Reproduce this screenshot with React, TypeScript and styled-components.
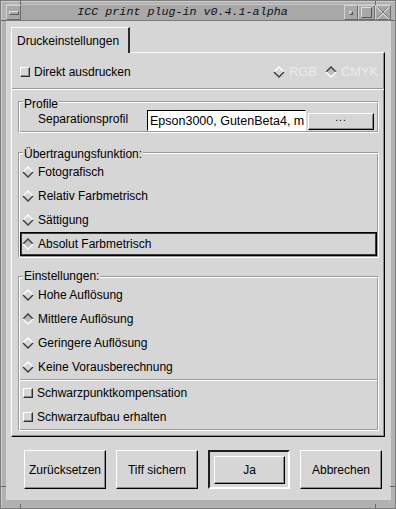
import React from "react";
import styled, { createGlobalStyle } from "styled-components";

const GlobalStyle = createGlobalStyle`
  html, body {
    margin: 0;
    padding: 0;
    background: #b2b2b2;
  }
  body {
    font-family: "Liberation Sans", Arial, sans-serif;
    font-size: 12px;
    color: #000;
  }
  * {
    box-sizing: border-box;
  }
`;

const BG = "#d6d6d6";
const ETCH = "#9a9a9a";

const Window = styled.div`
    position: relative;
    width: 396px;
    height: 509px;
    background: #b2b2b2;
    border: 1px solid #7c7c7c;
    box-shadow: inset 1px 1px 0 #cfcfcf;
    padding: 3px 4px 8px 5px;
    display: flex;
    flex-direction: column;
`;

const Tick = styled.span<{ $v?: boolean }>`
    position: absolute;
    background: #6a6a6a;
    width: ${(p) => (p.$v ? "1px" : "5px")};
    height: ${(p) => (p.$v ? "4px" : "1px")};
`;

const TitleBar = styled.div`
    height: 17px;
    display: flex;
    background: #a8a8a8;
    border-top: 1px solid #c6c6c6;
    border-bottom: 1px solid #7a7a7a;
`;

const TitleButton = styled.div<{ $w: number }>`
    width: ${(p) => p.$w}px;
    height: 100%;
    display: flex;
    align-items: center;
    justify-content: center;
    border: 1px solid;
    border-color: #d4d4d4 #6c6c6c #6c6c6c #d4d4d4;
`;

const MenuBar = styled.span`
    width: 10px;
    height: 4px;
    border: 1px solid;
    border-color: #e0e0e0 #555 #555 #e0e0e0;
`;

const MinBox = styled.span`
    width: 4px;
    height: 4px;
    border: 1px solid;
    border-color: #e0e0e0 #555 #555 #e0e0e0;
`;

const MaxBox = styled.span`
    width: 11px;
    height: 11px;
    border: 1px solid;
    border-color: #e0e0e0 #555 #555 #e0e0e0;
`;

const Title = styled.div`
    flex: 1;
    text-align: center;
    font-family: "Liberation Mono", "Courier New", monospace;
    font-style: italic;
    font-size: 11.7px;
    line-height: 15px;
    color: #111;
`;

const Content = styled.div`
    flex: 1;
    background: ${BG};
    padding: 6px 6px 0 5px;
    display: flex;
    flex-direction: column;
`;

const Tab = styled.div`
    position: relative;
    z-index: 1;
    align-self: flex-start;
    width: 119px;
    height: 26px;
    margin-bottom: -1px;
    padding: 6px 0 0 5px;
    line-height: 14px;
    background: ${BG};
    border-top: 1px solid #fff;
    border-left: 1px solid #fff;
    border-right: 2px solid #2a2a2a;
`;

const Panel = styled.div`
    width: 374px;
    height: 385px;
    border: 1px solid;
    border-color: #fff #000 #000 #fff;
    box-shadow: inset -1px -1px 0 #8c8c8c;
    display: flex;
    flex-direction: column;
`;

const TopRow = styled.div`
    height: 20px;
    margin-top: 9px;
    padding: 0 6px 0 8px;
    display: flex;
    align-items: center;
`;

const Spacer = styled.div`
    flex: 1;
`;

const Separator = styled.div<{ $top: number }>`
    height: 2px;
    margin-top: ${(p) => p.$top}px;
    border-top: 1px solid ${ETCH};
    border-bottom: 1px solid #fff;
`;

const Group = styled.div<{ $top: number }>`
    margin: ${(p) => p.$top}px 5px 0 6px;
    padding: 0 1px 1px;
    border: 1px solid;
    border-color: ${ETCH} #fff #fff ${ETCH};
    box-shadow: inset 1px 1px 0 #fff, inset -1px -1px 0 ${ETCH};
    display: flex;
    flex-direction: column;
`;

const GroupTitle = styled.div<{ $lift: number; $after: number }>`
    align-self: flex-start;
    margin: ${(p) => -p.$lift}px 0 ${(p) => p.$after}px 3px;
    padding: 0 1px;
    line-height: 14px;
    background: ${BG};
`;

const FieldRow = styled.div`
    height: 21px;
    padding-left: 18px;
    display: flex;
    align-items: center;
`;

const FieldLabel = styled.span`
    width: 109px;
    padding-bottom: 4px;
    line-height: 14px;
`;

const TextField = styled.div`
    width: 159px;
    height: 21px;
    padding: 2px 0 0 2px;
    background: #fff;
    border: 1px solid;
    border-color: #000 #fff #fff #000;
    font-size: 12.5px;
    line-height: 16px;
    white-space: nowrap;
    overflow: hidden;
`;

const SmallButton = styled.div`
    width: 66px;
    height: 17px;
    margin: 2px 0 0 2px;
    border: 1px solid;
    border-color: #fff #000 #000 #fff;
    box-shadow: inset -1px -1px 0 #8c8c8c;
    text-align: center;
    font-size: 10px;
    line-height: 8px;
    letter-spacing: 1px;
`;

const Option = styled.div<{ $active?: boolean }>`
    height: 24px;
    padding-left: 1px;
    display: flex;
    align-items: center;
    gap: 4px;
    border: 1px solid ${(p) => (p.$active ? "#000" : "transparent")};
    box-shadow: ${(p) => (p.$active ? "inset 0 0 0 1px #3a3a3a" : "none")};
`;

const CheckRow = styled.div`
    height: 24px;
    padding-left: 3px;
    display: flex;
    align-items: center;
    gap: 4px;
`;

const CheckBox = styled.span`
    width: 10px;
    height: 10px;
    border: 1px solid;
    border-color: #fff #2e2e2e #2e2e2e #fff;
    box-shadow: inset -1px -1px 0 #8c8c8c;
`;

const Label = styled.span<{ $disabled?: boolean }>`
    color: ${(p) => (p.$disabled ? "#ebebeb" : "#000")};
    font-size: ${(p) => (p.$disabled ? "12.8px" : "12px")};
    line-height: 14px;
`;

const ModeChoice = styled.span`
    display: flex;
    align-items: center;
    gap: 4px;
    margin-left: 8px;
`;

const ButtonBar = styled.div`
    margin: 13px 0 0 13px;
    display: grid;
    grid-template-columns: repeat(4, 82px);
    column-gap: 10px;
    height: 39px;
`;

const PushButton = styled.div`
    width: 100%;
    height: 100%;
    display: flex;
    align-items: center;
    justify-content: center;
    border: 1px solid;
    border-color: #fff #000 #000 #fff;
    box-shadow: inset -1px -1px 0 #8c8c8c;
`;

const DefaultRing = styled.div`
    border: 2px solid;
    border-color: #1e1e1e #fff #fff #1e1e1e;
    padding: 4px 3px 3px 4px;
`;

const Diamond: React.FC<{ on?: boolean }> = ({ on }) => {
    const light = "#ffffff";
    const dark = "#3a3a3a";
    return (
        <svg width="12" height="12" viewBox="0 0 12 12">
            {on && <polygon points="6,1 11,6 6,11 1,6" fill="#bdbdbd" />}
            <polyline points="1,6 6,1 11,6" fill="none" stroke={on ? dark : light} strokeWidth="1.4" />
            <polyline points="1,6 6,11 11,6" fill="none" stroke={on ? light : dark} strokeWidth="1.4" />
        </svg>
    );
};

const CloseIcon = () => (
    <svg width="14" height="14" viewBox="0 0 14 14">
        <path d="M1 1 L13 13 M13 1 L1 13" stroke="#e4e4e4" strokeWidth="1.2" />
        <path d="M2 1 L13 12 M12 1 L1 12" stroke="#606060" strokeWidth="0.8" />
    </svg>
);

const transfer = ["Fotografisch", "Relativ Farbmetrisch", "Sättigung", "Absolut Farbmetrisch"];
const resolution = ["Hohe Auflösung", "Mittlere Auflösung", "Geringere Auflösung", "Keine Vorausberechnung"];

const App: React.FC = () => {
    return (
        <>
            <GlobalStyle />
            <Window>
                <Tick $v style={{ left: 19, top: 0 }} />
                <Tick $v style={{ left: 374, top: 0 }} />
                <Tick $v style={{ left: 19, bottom: 0 }} />
                <Tick $v style={{ left: 374, bottom: 0 }} />
                <Tick style={{ left: 0, top: 19 }} />
                <Tick style={{ right: 0, top: 19 }} />
                <Tick style={{ left: 0, bottom: 21 }} />
                <Tick style={{ right: 0, bottom: 21 }} />

                <TitleBar>
                    <TitleButton $w={15}>
                        <MenuBar />
                    </TitleButton>
                    <Title>ICC print plug-in v0.4.1-alpha</Title>
                    <TitleButton $w={14}>
                        <MinBox />
                    </TitleButton>
                    <TitleButton $w={17}>
                        <MaxBox />
                    </TitleButton>
                    <TitleButton $w={16}>
                        <CloseIcon />
                    </TitleButton>
                </TitleBar>

                <Content>
                    <Tab>Druckeinstellungen</Tab>
                    <Panel>
                        <TopRow>
                            <CheckBox />
                            <Label style={{ marginLeft: 4 }}>Direkt ausdrucken</Label>
                            <Spacer />
                            <ModeChoice>
                                <Diamond />
                                <Label $disabled>RGB</Label>
                            </ModeChoice>
                            <ModeChoice>
                                <Diamond on />
                                <Label $disabled>CMYK</Label>
                            </ModeChoice>
                        </TopRow>

                        <Separator $top={6} />

                        <Group $top={11}>
                            <GroupTitle $lift={5} $after={-1}>Profile</GroupTitle>
                            <FieldRow>
                                <FieldLabel>Separationsprofil</FieldLabel>
                                <TextField>Epson3000, GutenBeta4, m</TextField>
                                <SmallButton>...</SmallButton>
                            </FieldRow>
                        </Group>

                        <Group $top={19}>
                            <GroupTitle $lift={6} $after={-1}>Übertragungsfunktion:</GroupTitle>
                            {transfer.map((t, i) => (
                                <Option key={t} $active={i === 3}>
                                    <Diamond on={i === 3} />
                                    <Label>{t}</Label>
                                </Option>
                            ))}
                        </Group>

                        <Group $top={18}>
                            <GroupTitle $lift={8} $after={0}>Einstellungen:</GroupTitle>
                            {resolution.map((t, i) => (
                                <Option key={t}>
                                    <Diamond on={i === 1} />
                                    <Label>{t}</Label>
                                </Option>
                            ))}
                            <Separator $top={0} />
                            <CheckRow>
                                <CheckBox />
                                <Label>Schwarzpunktkompensation</Label>
                            </CheckRow>
                            <CheckRow>
                                <CheckBox />
                                <Label>Schwarzaufbau erhalten</Label>
                            </CheckRow>
                        </Group>
                    </Panel>

                    <ButtonBar>
                        <PushButton>Zurücksetzen</PushButton>
                        <PushButton>Tiff sichern</PushButton>
                        <DefaultRing>
                            <PushButton>Ja</PushButton>
                        </DefaultRing>
                        <PushButton>Abbrechen</PushButton>
                    </ButtonBar>
                </Content>
            </Window>
        </>
    );
};

export default App;
